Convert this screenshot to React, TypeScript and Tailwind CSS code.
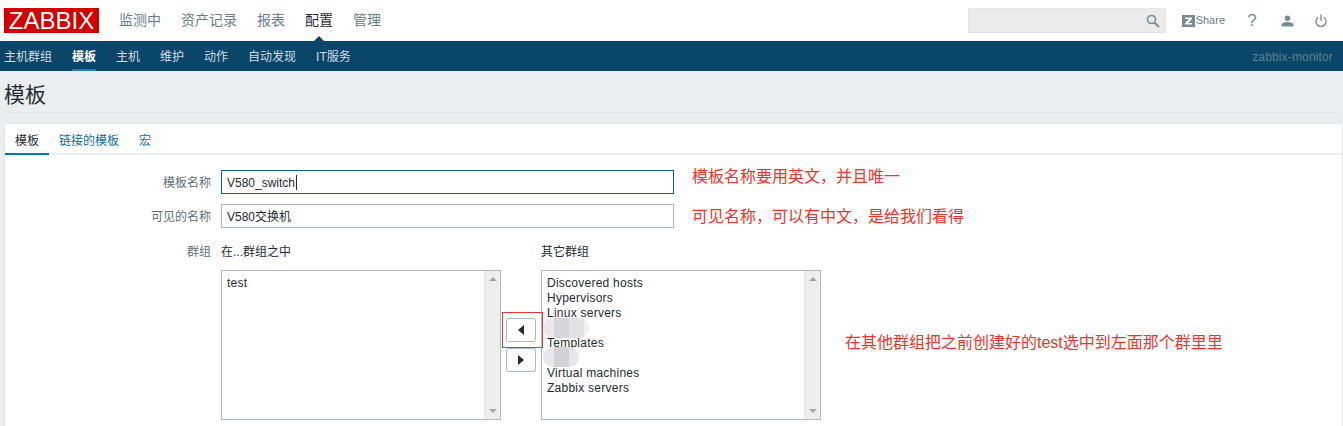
const font = "[font-family:'Liberation_Sans','Noto_Sans_CJK_SC',sans-serif]";

const mainNav = ["监测中", "资产记录", "报表", "配置", "管理"];
const subNav = ["主机群组", "模板", "主机", "维护", "动作", "自动发现", "IT服务"];
const tabs = ["模板", "链接的模板", "宏"];

function Scrollbar() {
  return (
    <div className="flex w-[16px] shrink-0 flex-col items-center justify-between bg-[#eeeeee] py-[6px] border-l border-[#e4e4e4]">
      <div className="h-0 w-0 border-x-[4px] border-b-[4px] border-x-transparent border-b-[#a5a5a5]" />
      <div className="h-0 w-0 border-x-[4px] border-t-[4px] border-x-transparent border-t-[#a5a5a5]" />
    </div>
  );
}

// blurred-out list entry, sits over its empty row
function Smudge({ cells, offset }: { cells: string[]; offset: string }) {
  return (
    <div className="relative h-[15px]">
      <div className={`absolute left-[-4px] flex h-[20px] overflow-hidden rounded-full ${offset}`}>
        {cells.map((c, i) => (
          <div key={i} className={c} />
        ))}
      </div>
    </div>
  );
}

function ListBox({ children }: { children: React.ReactNode }) {
  return (
    <div className="flex h-[150px] w-[280px] shrink-0 border border-[#acbbc4] bg-white">
      <div className="flex-1 overflow-hidden px-[5px] pt-[5px] text-[12px] leading-[15px] tracking-[0.25px] text-[#1f2c33]">
        {children}
      </div>
      <Scrollbar />
    </div>
  );
}

function FormInput({ value, active }: { value: string; active?: boolean }) {
  return (
    <div
      className={`flex h-[24px] w-[453px] shrink-0 items-center border bg-white px-[5px] pt-px text-[12px] text-[#1f2c33] ${
        active ? "border-[#0a6596]" : "border-[#acbbc4]"
      }`}
    >
      {value}
      {active && <span className="ml-[1px] h-[15px] w-px bg-[#1f2c33]" />}
    </div>
  );
}

export default function App() {
  return (
    <div className={`${font} h-[426px] w-[1343px] overflow-hidden bg-[#ebeef0] text-[12px] text-[#1f2c33]`}>
      <header className="flex h-[41px] items-center bg-white">
        <div className="ml-[4px] flex h-[25px] w-[95px] items-center justify-center bg-[#d40000] text-[24px] leading-none text-white">
          ZABBIX
        </div>
        <nav className="ml-[20px] flex gap-[20px] text-[14px]">
          {mainNav.map((item) => (
            <a key={item} className={item === "配置" ? "relative text-[#1f2c33]" : "text-[#69808d]"}>
              {item}
              {item === "配置" && (
                <span className="absolute left-[6px] top-[26px] h-0 w-0 border-x-[8px] border-b-[8px] border-x-transparent border-b-[#0a466a]" />
              )}
            </a>
          ))}
        </nav>
        <div className="ml-auto flex items-center">
          <div className="flex h-[25px] w-[198px] items-center justify-end border border-[#e4e4e4] bg-[#ebebeb] pr-[5px]">
            <svg width="14" height="14" viewBox="0 0 14 14" fill="none" stroke="#768d99" strokeWidth="1.6">
              <circle cx="5.5" cy="5.5" r="4" />
              <path d="M8.5 8.5 13 13" strokeWidth="2" />
            </svg>
          </div>
          <div className="ml-[16px] flex items-center">
            <svg width="13" height="12" viewBox="0 0 13 12">
              <rect width="13" height="12" fill="#768d99" />
              <path d="M3 2.5h7v1.6L6 8h4v1.5H3V8l4-3.9H3z" fill="#fff" />
            </svg>
            <span className="ml-[1px] text-[11px] text-[#69808d]">Share</span>
          </div>
          <span className="ml-[22px] w-[10px] text-center text-[17px] leading-none text-[#768d99]">?</span>
          <svg className="ml-[24px]" width="13" height="12" viewBox="0 0 14 12" fill="#768d99">
            <circle cx="7" cy="3" r="3" />
            <path d="M0.5 12V10.2C0.5 8.2 4 7.2 7 7.2s6.5 1 6.5 3V12z" />
          </svg>
          <svg className="ml-[21px] mr-[16px]" width="12" height="13" viewBox="0 0 13 13" fill="none" stroke="#768d99" strokeWidth="1.5">
            <path d="M3.6 3A5.4 5.4 0 1 0 9.4 3" />
            <path d="M6.5 0v7" />
          </svg>
        </div>
      </header>

      <div className="flex h-[30px] items-center bg-[#0a466a] pl-[4px]">
        <nav className="flex h-full gap-[20px]">
          {subNav.map((item) => (
            <a
              key={item}
              className={`flex h-full items-center border-b-2 pt-[3px] ${
                item === "模板" ? "border-[#1f7fbd] font-bold text-white" : "border-transparent text-[#d3dde3]"
              }`}
            >
              {item}
            </a>
          ))}
        </nav>
        <span className="ml-auto mr-[10px] pt-[2px] tracking-[0.15px] text-[#5f818f]">zabbix-monitor</span>
      </div>

      <div className="mx-[4px] flex h-[42px] items-center border-b border-[#e0e4e7] pt-[6px] text-[21px] text-[#1f2c33]">
        模板
      </div>

      <main className="ml-[4px] mt-[10px] h-[400px] border border-[#e6e9eb] bg-white">
        <div className="flex h-[31px] gap-[20px] border-b-2 border-[#ebeef0] pl-[10px]">
          {tabs.map((tab, i) => (
            <a
              key={tab}
              className={`relative flex h-[31px] items-center pt-[2px] ${i === 0 ? "text-[#1f2c33]" : "text-[#0a6fa8]"}`}
            >
              {tab}
              {i === 0 && <span className="absolute bottom-0 left-[-10px] right-[-10px] h-[2px] bg-[#0275b8]" />}
            </a>
          ))}
        </div>

        <div className="mt-[15px] flex h-[24px] items-center">
          <label className="w-[206px] shrink-0 pt-[2px] text-right text-[#5c6f7a]">模板名称</label>
          <div className="ml-[10px]"><FormInput value="V580_switch" active /></div>
          <span className="mb-[10px] ml-[18px] text-[16px] text-[#f0342c]">{"模板名称要用英文\uFF0C并且唯一"}</span>
        </div>
        <div className="mt-[10px] flex h-[24px] items-center">
          <label className="w-[206px] shrink-0 pt-[2px] text-right text-[#5c6f7a]">可见的名称</label>
          <div className="ml-[10px]"><FormInput value="V580交换机" /></div>
          <span className="ml-[18px] mt-[2px] text-[16px] text-[#f0342c]">{"可见名称\uFF0C可以有中文\uFF0C是给我们看得"}</span>
        </div>

        <div className="mt-[15px] flex h-[18px] items-center">
          <label className="w-[206px] shrink-0 text-right text-[#5c6f7a]">群组</label>
          <span className="ml-[10px] w-[320px]">在...群组之中</span>
          <span>其它群组</span>
        </div>

        <div className="ml-[216px] mt-[9px] flex items-start">
          <ListBox>test</ListBox>
          <div className="relative flex w-[40px] shrink-0 flex-col gap-[6px] pl-[5px] pt-[48px]">
            <button className="flex h-[24px] w-[30px] items-center justify-center rounded-[2px] border border-[#acbbc4] bg-white">
              <span className="h-0 w-0 border-y-[5px] border-r-[6px] border-y-transparent border-r-[#1f2c33]" />
            </button>
            <button className="flex h-[24px] w-[30px] items-center justify-center rounded-[2px] border border-[#acbbc4] bg-white">
              <span className="h-0 w-0 border-y-[5px] border-l-[6px] border-y-transparent border-l-[#1f2c33]" />
            </button>
            <div className="absolute left-[1px] top-[42px] h-[36px] w-[41px] border border-[#f0342c]" />
          </div>
          <ListBox>
            <div>Discovered hosts</div>
            <div>Hypervisors</div>
            <div>Linux servers</div>
            <Smudge offset="top-[-3px]" cells={["w-[11px] bg-[#e8e8ea]", "w-[15px] bg-[#d8d4db]", "w-[15px] bg-[#e3e1e5]", "w-[5px] bg-[#f0eff1]"]} />
            <div className="relative">Templates</div>
            <Smudge offset="top-[-4px]" cells={["w-[11px] bg-[#e8e6e9]", "w-[15px] bg-[#d5d0d8]", "w-[10px] bg-[#e8e6e9]"]} />
            <div>Virtual machines</div>
            <div>Zabbix servers</div>
          </ListBox>
          <span className="ml-[24px] mt-[61px] text-[16px] text-[#f0342c]">在其他群组把之前创建好的test选中到左面那个群里里</span>
        </div>
      </main>
    </div>
  );
}
